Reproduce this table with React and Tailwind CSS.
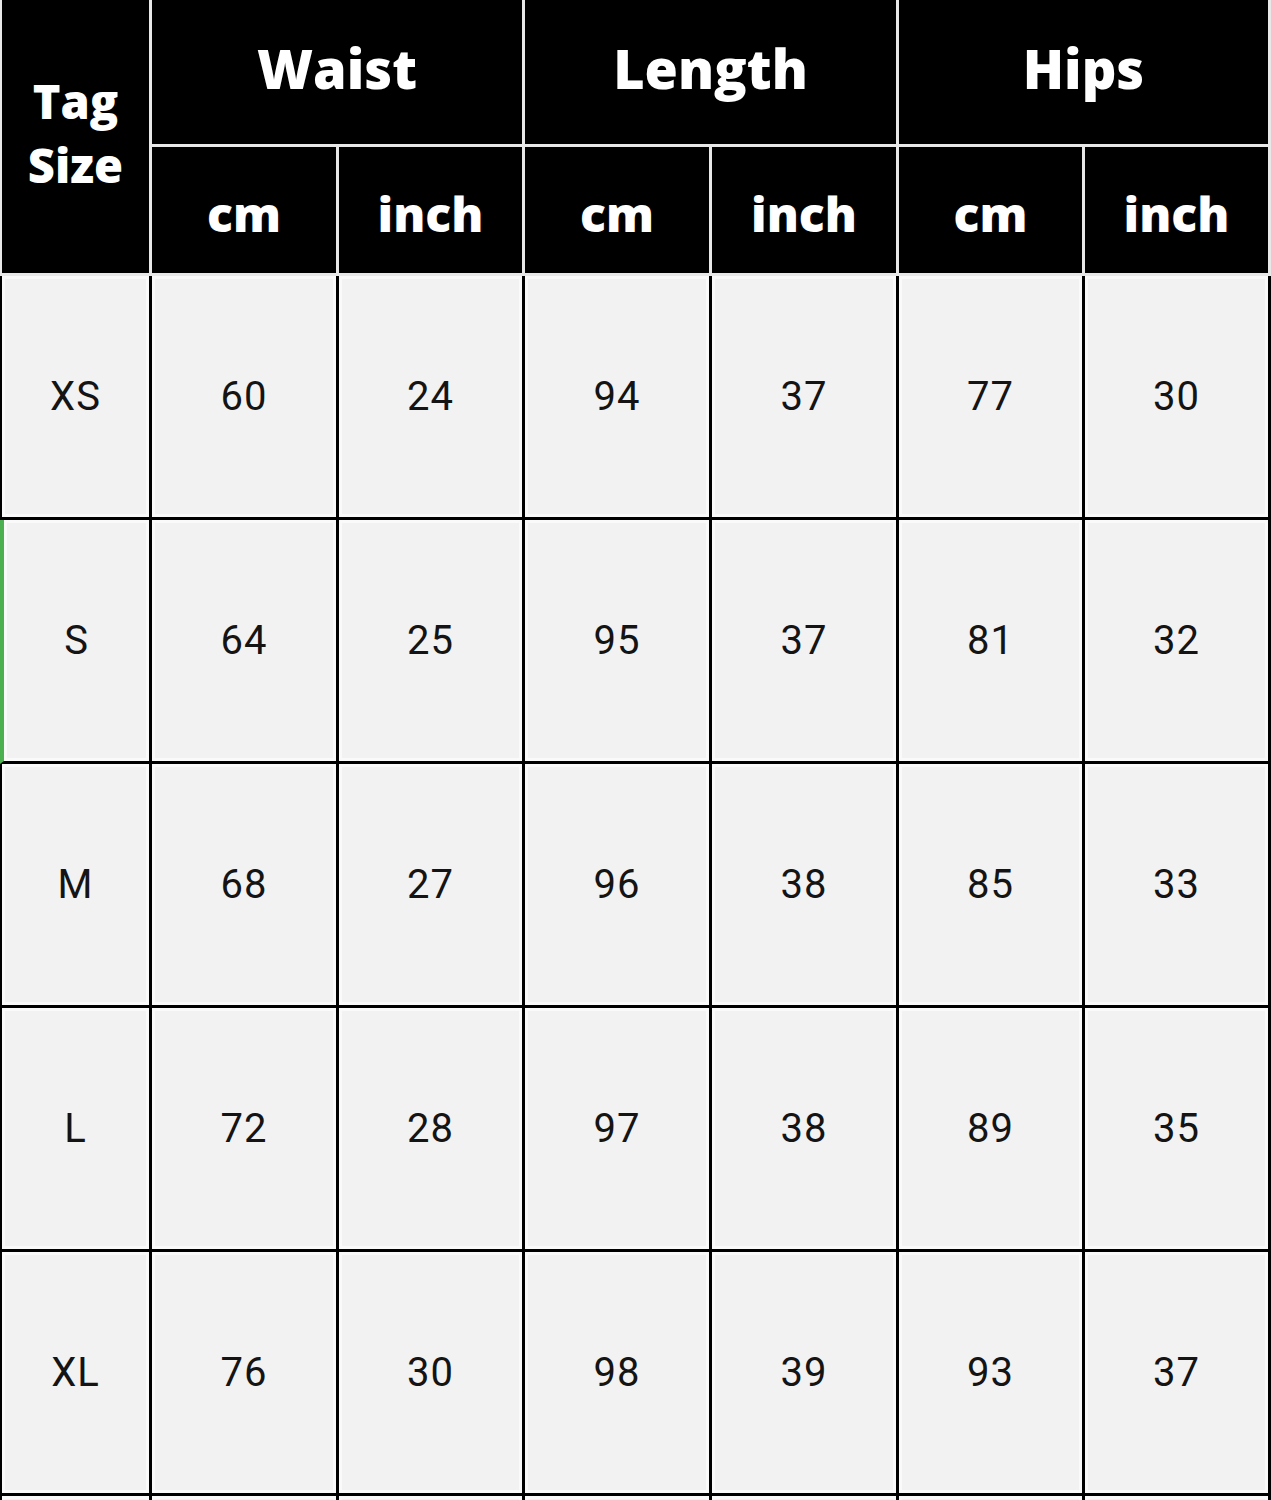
const groups = ['Waist', 'Length', 'Hips'];

const rows = [
  ['XS', 60, 24, 94, 37, 77, 30],
  ['S', 64, 25, 95, 37, 81, 32],
  ['M', 68, 27, 96, 38, 85, 33],
  ['L', 72, 28, 97, 38, 89, 35],
  ['XL', 76, 30, 98, 39, 93, 37],
];

function BodyCell({ children, first, selected }) {
  return (
    <div
      className={`h-[244px] bg-[#f2f2f2] border-r-[3px] border-b-[3px] border-black shadow-[inset_0_0_0_3px_#fafafa] flex items-center justify-center font-['Roboto','Liberation_Sans',sans-serif] text-[40px] font-normal tracking-wide text-[#141414] ${first ? (selected ? 'border-l-[4px] border-l-[#4caf50]' : 'border-l-[2px]') : ''}`}
    >
      {children}
    </div>
  );
}

export default function App() {
  return (
    <div className="w-[1271px] h-[1500px] overflow-hidden bg-white">
      <div className="grid grid-cols-[152px_187px_186px_187px_187px_186px_186px] font-['Open_Sans','Liberation_Sans',sans-serif]">
        <div className="row-span-2 bg-black text-white border-l-2 border-r-[3px] border-b-[3px] border-[#e8e8e8] flex flex-col items-center justify-center font-extrabold text-[47px] leading-[64px] pb-2">
          <span>Tag</span>
          <span>Size</span>
        </div>
        {groups.map((g) => (
          <div
            key={g}
            className="col-span-2 h-[147px] bg-black text-white border-r-[3px] border-b-[3px] border-[#e8e8e8] flex items-center justify-center font-extrabold text-[54px] pb-2"
          >
            {g}
          </div>
        ))}
        {groups.flatMap((g) =>
          ['cm', 'inch'].map((u) => (
            <div
              key={g + u}
              className="h-[129px] bg-black text-white border-r-[3px] border-b-[3px] border-[#e8e8e8] flex items-center justify-center font-extrabold text-[48px] pt-2"
            >
              {u}
            </div>
          ))
        )}
        {rows.map((r) =>
          r.map((v, i) => (
            <BodyCell key={r[0] + i} first={i === 0} selected={r[0] === 'S'}>
              {v}
            </BodyCell>
          ))
        )}
        {rows[0].map((_, i) => (
          <BodyCell key={'pad' + i} first={i === 0} />
        ))}
      </div>
    </div>
  );
}
